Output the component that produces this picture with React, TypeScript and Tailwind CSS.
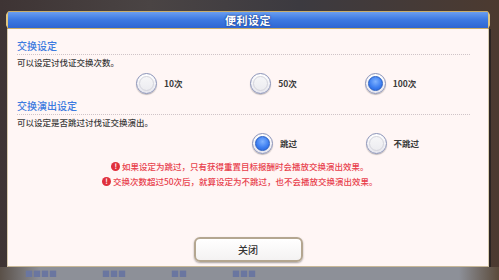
import React from "react";

const font = { fontFamily: '"Noto Sans CJK SC", "Noto Sans", sans-serif' };

function Radio({ checked, label }: { checked?: boolean; label: string }) {
  return (
    <div className="flex w-[116px] items-center gap-[7px]">
      <div className="flex h-[21px] w-[21px] items-center justify-center rounded-full border-[1.5px] border-[#8a93b8] bg-[linear-gradient(#ffffff,#e6e6ee)] shadow-[0_1px_1px_rgba(0,0,0,0.25)]">
        {checked ? (
          <div className="h-[15px] w-[15px] rounded-full border border-[#2a5fc0] bg-[radial-gradient(circle_at_50%_35%,#7fb2ff,#3a7cf0_60%,#2a63d6)]" />
        ) : (
          <div className="h-[15px] w-[15px] rounded-full border border-[#d4d4dc] bg-[linear-gradient(#f6f6f8,#ececf0)]" />
        )}
      </div>
      <span className="text-[8.5px] font-bold leading-none text-[#3a3a3a]">{label}</span>
    </div>
  );
}

function Warn({ children }: { children: React.ReactNode }) {
  return (
    <div className="flex h-[15px] items-center gap-[2px]">
      <div className="flex h-[8.5px] w-[8.5px] items-center justify-center rounded-full bg-[#e0303c] text-[7px] font-bold leading-none text-white">
        !
      </div>
      <span className="text-[8.5px] font-medium leading-none text-[#e8404c]">{children}</span>
    </div>
  );
}

export default function App() {
  return (
    <div
      className="relative flex h-[280px] w-[499px] flex-col overflow-hidden bg-[linear-gradient(90deg,#3e3434,#4a4444_30%,#3c3a40_60%,#4c3a30)]"
      style={font}
    >
      <div className="flex flex-1 flex-col pl-[7px] pr-[10px] pt-[11px]">
        {/* Title bar */}
        <div className="relative flex h-[18px] items-center justify-center rounded-t-[2px] border border-[#c9ad6a] bg-[linear-gradient(#6a9ef0,#3f7be2_45%,#2f66d2)]">
          <div className="absolute left-[-2px] top-[1px] h-[14px] w-[4px] rounded-full border-l-2 border-[#e0c680]" />
          <div className="absolute right-[-2px] top-[1px] h-[14px] w-[4px] rounded-full border-r-2 border-[#e0c680]" />
          <span className="text-[11px] font-bold leading-none tracking-[0.5px] text-white [text-shadow:0_0_2px_#163a8a,0_0_1px_#163a8a]">
            便利设定
          </span>
        </div>
        {/* Body */}
        <div className="flex flex-1 flex-col border-x border-b border-x-[#d8cbb0] border-b-[#c8b898] bg-[#fff6f5] pl-[9px] pr-[9px] pt-[10px] shadow-[2px_0_0_#2a2422]">
          <div className="mr-[9px] border-b border-dotted border-[#cfc4c8]">
            <div className="h-[15px] text-[10px] font-medium leading-[14px] text-[#3d7ae0]">交换设定</div>
          </div>
          <div className="mt-[1px] h-[12px] text-[8.5px] font-medium leading-[12px] text-[#3a3a3a]">可以设定讨伐证交换次数。</div>
          <div className="mt-[4px] flex h-[22px] items-center pl-[119px]">
            <Radio label="10次" />
            <Radio label="50次" />
            <Radio checked label="100次" />
          </div>
          <div className="mr-[9px] mt-[5px] border-b border-dotted border-[#cfc4c8]">
            <div className="h-[15px] text-[10px] font-medium leading-[14px] text-[#3d7ae0]">交换演出设定</div>
          </div>
          <div className="mt-[1px] h-[12px] text-[8.5px] font-medium leading-[12px] text-[#3a3a3a]">可以设定是否跳过讨伐证交换演出。</div>
          <div className="mt-[4px] flex h-[22px] items-center pl-[235px]">
            <Radio checked label="跳过" />
            <Radio label="不跳过" />
          </div>
          <div className="mr-[16px] mt-[5px] flex flex-col items-center">
            <Warn>如果设定为跳过，只有获得重置目标报酬时会播放交换演出效果。</Warn>
            <Warn>交换次数超过50次后，就算设定为不跳过，也不会播放交换演出效果。</Warn>
          </div>
          <div className="flex-1" />
          <div className="flex justify-center pb-[4px]">
            <button className="flex h-[25px] w-[109px] items-center justify-center rounded-[6px] border-2 border-[#b4a690] bg-[linear-gradient(#ffffff,#f4f2f2)] shadow-[0_1px_2px_rgba(0,0,0,0.35)]">
              <span className="text-[10px] font-medium leading-none text-[#333]">关闭</span>
            </button>
          </div>
        </div>
      </div>
      <div className="flex h-[13px] items-center gap-[45px] bg-[linear-gradient(90deg,#5a5048,#8d9098_8%,#8d9098_92%,#5a4a3a)] pl-[25px] text-[8px] text-[#6a76a0] blur-[0.6px]">
        <span>■■■■</span>
        <span>■■■</span>
        <span>■■</span>
        <span>■■■</span>
      </div>
    </div>
  );
}
